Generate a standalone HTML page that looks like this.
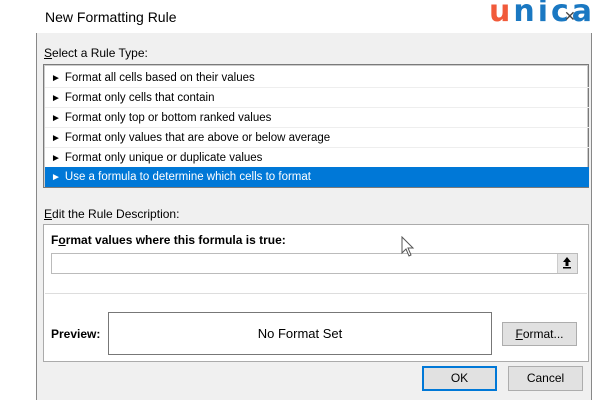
<!DOCTYPE html>
<html><head><meta charset="utf-8"><style>
*{margin:0;padding:0;box-sizing:border-box}
body{width:600px;height:400px;overflow:hidden;background:#fff;font-family:"Liberation Sans",sans-serif;font-size:12px;color:#000;position:relative}
.a{position:absolute}
.dlg{left:36px;top:0;width:556px;height:400px;background:#f0f0f0;border-left:1px solid #888;border-right:1px solid #888}
.title{left:36px;top:0;width:556px;height:33px;background:#fff}
.row{position:absolute;left:1px;width:544px;height:20px;line-height:20px;padding-left:6px;border-bottom:1px solid #eee;font-size:11.5px}
.row b{font-weight:normal;font-size:10px;margin-right:4px}
.btn{background:#e1e1e1;border:1px solid #adadad;text-align:center;font-size:12px}
</style></head><body>
<div class="a dlg"></div>
<div class="a title"></div>
<div class="a" style="left:45px;top:9px;font-size:14px">New Formatting Rule</div>
<div class="a" style="left:489px;top:-6px;font-size:30px;font-weight:bold;letter-spacing:3px;font-family:'DejaVu Sans',sans-serif"><span style="color:#f15a3a">u</span><span style="color:#1a78c2">nica</span></div>
<div class="a" style="left:564px;top:8px;font-size:14px;color:#444">✕</div>
<div class="a" style="left:44px;top:46px;font-size:12px"><u>S</u>elect a Rule Type:</div>
<div class="a" style="left:43px;top:64px;width:546px;height:124px;background:#fff;border:1px solid #7a7a7a;box-shadow:inset 0 0 0 1px #ccc">
<div class="row" style="top:3px"><b>►</b>Format all cells based on their values</div>
<div class="row" style="top:23px"><b>►</b>Format only cells that contain</div>
<div class="row" style="top:43px"><b>►</b>Format only top or bottom ranked values</div>
<div class="row" style="top:63px"><b>►</b>Format only values that are above or below average</div>
<div class="row" style="top:83px"><b>►</b>Format only unique or duplicate values</div>
<div class="row" style="top:102px;background:#0078d7;color:#fff;border:0"><b>►</b>Use a formula to determine which cells to format</div>
</div>
<div class="a" style="left:44px;top:207px"><u>E</u>dit the Rule Description:</div>
<div class="a" style="left:43px;top:224px;width:546px;height:138px;background:#fff;border:1px solid #ababab"></div>
<div class="a" style="left:51px;top:233px;font-weight:bold">F<u>o</u>rmat values where this formula is true:</div>
<div class="a" style="left:51px;top:253px;width:527px;height:21px;border:1px solid #bbb;background:#fff"></div>
<div class="a" style="left:557px;top:254px;width:20px;height:19px;background:#e6e6e6;border-left:1px solid #ccc"></div>
<svg class="a" style="left:561px;top:256px" width="12" height="14" viewBox="0 0 12 14"><path d="M6 1 L10 6 L7.5 6 L7.5 10 L4.5 10 L4.5 6 L2 6 Z" fill="#000"/><rect x="2" y="11" width="8" height="1.5" fill="#000"/></svg>
<div class="a" style="left:45px;top:293px;width:542px;height:1px;background:#ddd"></div>
<div class="a" style="left:51px;top:327px;font-weight:bold">Preview:</div>
<div class="a" style="left:108px;top:312px;width:384px;height:43px;border:1px solid #777;background:#fff;text-align:center;line-height:41px;font-size:13px">No Format Set</div>
<div class="a btn" style="left:502px;top:322px;width:75px;height:24px;line-height:22px"><u>F</u>ormat...</div>
<div class="a btn" style="left:422px;top:366px;width:75px;height:25px;line-height:21px;border:2px solid #0078d7">OK</div>
<div class="a btn" style="left:508px;top:366px;width:75px;height:25px;line-height:23px">Cancel</div>
<svg class="a" style="left:401px;top:236px" width="16" height="22" viewBox="0 0 16 22"><path d="M1 1 L1 17 L5 13 L8 20 L10 19 L7 12 L12 12 Z" fill="#fff" stroke="#555" stroke-width="1"/></svg>
</body></html>
